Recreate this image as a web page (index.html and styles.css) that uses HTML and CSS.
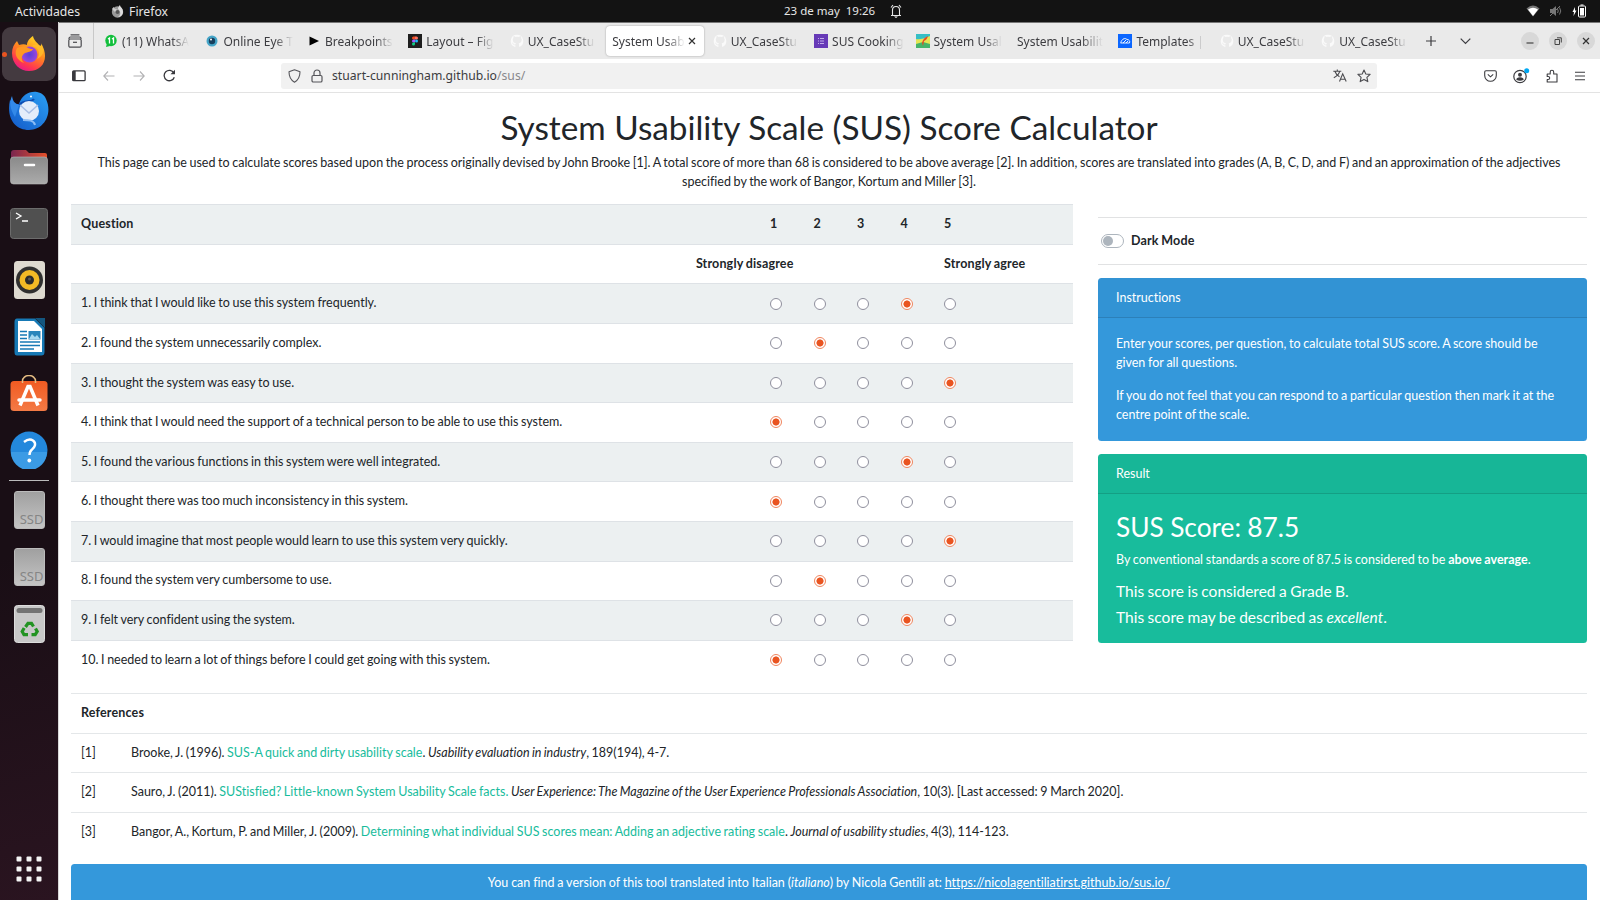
FILE: index.html
```
<!DOCTYPE html>
<html lang="es">
<head>
<meta charset="utf-8">
<title>System Usability Scale (SUS) Score Calculator</title>
<link rel="stylesheet" href="styles.css">
</head>
<body>
<svg class="defs" width="0" height="0">
  <defs>
    <symbol id="github" viewBox="0 0 16 16"><path fill="#fafafa" d="M8 .8a7.2 7.2 0 0 0-2.3 14c.4.1.5-.1.5-.4v-1.6c-2 .4-2.500-.5-2.700-1-.1-.2-.5-1-.9-1.100-.3-.2-.7-.6 0-.6.7 0 1.100.6 1.300.9.700 1.300 1.900.9 2.400.7.1-.5.3-.9.5-1.100-1.800-.2-3.600-.9-3.600-3.900 0-.9.3-1.600.8-2.100-.1-.2-.4-1 .1-2.100 0 0 .7-.2 2.200.8a7.500 7.500 0 0 1 4 0c1.500-1 2.200-.8 2.200-.8.5 1.100.2 1.900.1 2.100.5.600.8 1.300.8 2.100 0 3-1.900 3.700-3.600 3.900.3.200.5.700.5 1.400v2.200c0 .2.200.500.500.4A7.200 7.200 0 0 0 8 .8z"/></symbol>
  </defs>
</svg>
<div class="desktop">
  <header class="topbar">
    <span class="top-left">Actividades</span>
    <span class="top-app"><svg width="13" height="13" viewBox="0 0 13 13"><circle cx="6.500" cy="7" r="5.700" fill="#999"/><path d="M1 4l1.500-2 1 1.500L7 5 4 7z" fill="#ccc"/><path d="M7 4c0-2 1-3 2-4 0 2 3 3 3 7 0 3-3 5-5 5 3-2 3-5 0-8z" fill="#ddd"/><circle cx="6.500" cy="7" r="2" fill="#555"/></svg>Firefox</span>
    <span class="top-clock">23 de may&nbsp; 19:26</span>
    <svg class="bell" width="12" height="14" viewBox="0 0 12 14"><path d="M1 11.500h10M2.500 11V6a3.500 3.500 0 0 1 7 0v5M3 1L1 3.500M9 1l2 2.500" fill="none" stroke="#e8e8e8" stroke-width="1.100"/><path d="M4 12.500h4l-2 1.500z" fill="#fff"/></svg>
    <span class="top-status">
      <svg width="14" height="12" viewBox="0 0 14 12"><path d="M.5 3.500Q7-2.500 13.500 3.500L7 11.500z" fill="#777"/><path d="M2 4.500Q7 1 12 4.500L7 11z" fill="#fff"/></svg>
      <svg width="14" height="12" viewBox="0 0 14 12"><path d="M1 4h2.500L7 1v10L3.500 8H1z" fill="#777"/><path d="M8.500 4q1.500 2 0 4M10.500 2.500q2.500 3.500 0 7M1 11L11 1" stroke="#777" fill="none"/></svg>
      <svg width="15" height="14" viewBox="0 0 15 14"><path d="M3 3L.5 8H2l-.5 4L4.500 6.500H3z" fill="#fff"/><rect x="6.500" y="2" width="7" height="11" rx="1" fill="none" stroke="#fff"/><rect x="8" y="4" width="4" height="7.500" fill="#fff"/><path d="M8.500 1h3" stroke="#fff"/></svg>
    </span>
  </header>
  <div class="workspace">
    <nav class="dock">
      <span class="dock-item active"><i class="running"></i>
        <svg width="38" height="38" viewBox="0 0 38 38"><defs><linearGradient id="ff" x1=".8" y1="0" x2=".3" y2="1"><stop offset="0" stop-color="#ffe226"/><stop offset=".45" stop-color="#ff8a1e"/><stop offset=".8" stop-color="#ff3750"/><stop offset="1" stop-color="#e5178f"/></linearGradient><radialGradient id="fp"><stop offset="0" stop-color="#5b3fd8"/><stop offset="1" stop-color="#9a46dd"/></radialGradient></defs><path d="M2 18c0-5 2-9 5-12l2 4c3-1 6-1 8 0 0-4 3-7 6-9 1 5 4 6 7 10 2-1 1-3 1-3 9 15 2 28-12 28C10 36 2 29 2 18z" fill="url(#ff)"/><circle cx="19.500" cy="19.500" r="8" fill="url(#fp)"/><path d="M7 13c5-2 9-2 11 0 2 1 5 1 5 1-1 3-6 3-8 4-3 2-5 6-1 10C6 25 4 18 7 13z" fill="#ff9822"/><path d="M22 11c7 1 9 8 5 13 6-3 8-8 5-12-3-2-6-4-10-1z" fill="#ffbe2b" opacity=".8"/></svg></span>
      <span class="dock-item"><svg width="42" height="42" viewBox="0 0 42 42"><defs><linearGradient id="tb" x1="1" y1="0" x2="0" y2="1"><stop offset="0" stop-color="#2aa0f4"/><stop offset="1" stop-color="#1459c8"/></linearGradient></defs><path d="M2 10c3 4 6 4 9 4C14 5 21 1 29 2c5 1 8 4 9 7 7 15-2 31-17 31C7 40-2 28 2 10z" fill="url(#tb)"/><path d="M4 6c1 5 2 7 7 9l-4 12C2 19 1 12 4 6z" fill="#3389e8"/><path d="M11 15c5-6 12-2 15-6" fill="none" stroke="#0e4eb4" stroke-width="2"/><ellipse cx="21" cy="21" rx="10" ry="10" fill="#e4edfa"/><path d="M12 15l9 8 9-8" fill="none" stroke="#a8bee5" stroke-width="1.500"/><path d="M15 30c5 0 11 0 12 5" stroke="#8dbdf5" stroke-width="2" fill="none"/><circle cx="23" cy="6.500" r="1" fill="#fff"/></svg></span>
      <span class="dock-item"><svg width="38" height="36" viewBox="0 0 38 36"><defs><linearGradient id="fo"><stop stop-color="#7a2650"/><stop offset="1" stop-color="#e5502a"/></linearGradient><linearGradient id="gr" x2="0" y2="1"><stop stop-color="#8a8a8a"/><stop offset="1" stop-color="#ababab"/></linearGradient></defs><path d="M1 4q0-3 3-3h12l3 3h16q2 0 2 2v15H1z" fill="url(#fo)"/><rect x=".5" y="8" width="37" height="27" rx="3" fill="url(#gr)" stroke="#bbb" stroke-width=".6"/><path d="M15 16h9" stroke="#fff" stroke-width="2.500" stroke-linecap="round"/></svg></span>
      <span class="dock-item"><svg width="38" height="31" viewBox="0 0 38 31"><rect x=".5" y=".5" width="37" height="30" rx="3" fill="#505050" stroke="#6c6c6c"/><path d="M6 5l5 3-5 3M12 13h6" fill="none" stroke="#fff" stroke-width="1.300"/></svg></span>
      <span class="dock-item"><svg width="31" height="38" viewBox="0 0 31 38"><rect width="31" height="38" rx="3.500" fill="#dedad0"/><circle cx="15.500" cy="19" r="13.500" fill="#303030"/><circle cx="15.500" cy="19" r="10" fill="#f3ba25"/><circle cx="15.500" cy="19" r="4.500" fill="#2b2b2b"/><circle cx="15.500" cy="18" r="1.500" fill="#555"/></svg></span>
      <span class="dock-item"><svg width="31" height="38" viewBox="0 0 31 38"><path d="M3 .5h18L30.500 10v24q0 3.500-3 3.500H3Q.5 37.500.5 34V4Q.5.5 3 .5z" fill="#1679b5"/><path d="M4 3h16l8 8v23H4z" fill="#fff"/><path d="M21 0h10v10z" fill="#14567f"/><path d="M6 13.500h7M6 17h7M6 20.500h7M6 24h20M6 27.500h20M6 31h14" stroke="#1679b5" stroke-width="1.400"/><rect x="14.500" y="13" width="12" height="8.500" fill="#2b86bb"/><path d="M15 21l3-5 3 3 2-2 3 4z" fill="#a8d9f0"/></svg></span>
      <span class="dock-item"><svg width="38" height="38" viewBox="0 0 38 38"><defs><linearGradient id="st" x2="0" y2="1"><stop stop-color="#f15b22"/><stop offset="1" stop-color="#f47a45"/></linearGradient></defs><rect x=".5" y="6" width="37" height="30" rx="3.500" fill="url(#st)"/><path d="M12.500 8V6a6.500 5.500 0 0 1 13 0v2" fill="none" stroke="#e5bd83" stroke-width="1.500"/><path d="M10 30.500l8-19h2l8 19" fill="none" stroke="#fff" stroke-width="3.500"/><path d="M9 25h21" stroke="#fff" stroke-width="3.500" stroke-linecap="round"/></svg></span>
      <span class="dock-item"><svg width="38" height="38" viewBox="0 0 38 38"><circle cx="19" cy="19" r="18.500" fill="#2388dc"/><path d="M1 21a18 18 0 0 0 36 0z" fill="#3b9be5"/><path d="M14 11q5-4 9-1.500c4 3 1.500 7-1 9-2 1.500-2.500 3-2.500 5.500" fill="none" stroke="#fff" stroke-width="2.400"/><circle cx="19.300" cy="29.500" r="1.900" fill="#fff"/></svg></span>
      <i class="dock-line"></i>
      <span class="dock-item"><span class="ssd">SSD</span></span>
      <span class="dock-item"><span class="ssd">SSD</span></span>
      <span class="dock-item"><svg width="31" height="38" viewBox="0 0 31 38"><rect x=".5" y=".5" width="30" height="37" rx="3" fill="#c8c8c8" stroke="#ddd"/><rect x="2.500" y="3" width="26" height="5" rx="2.500" fill="#737373"/><g fill="none" stroke="#229322" stroke-width="3.200"><path d="M11.500 22l2.500-3.700h3.500l2 3.200M21.500 23.500l1.700 3-2 3.200H17.500M14 29.700H10L8.200 26.500l2-3.500"/></g></svg></span>
      <svg class="apps" width="26" height="26" viewBox="0 0 26 26"><g fill="#f5f5f5"><rect x=".5" y=".5" width="5" height="5" rx="1"/><rect x="10.500" y=".5" width="5" height="5" rx="1"/><rect x="20.500" y=".5" width="5" height="5" rx="1"/><rect x=".5" y="10.500" width="5" height="5" rx="1"/><rect x="10.500" y="10.500" width="5" height="5" rx="1"/><rect x="20.500" y="10.500" width="5" height="5" rx="1"/><rect x=".5" y="20.500" width="5" height="5" rx="1"/><rect x="10.500" y="20.500" width="5" height="5" rx="1"/><rect x="20.500" y="20.500" width="5" height="5" rx="1"/></g></svg>
    </nav>
    <div class="browser">
      <div class="tabbar">
        <span class="tabview"><svg width="14" height="14" viewBox="0 0 14 14" fill="none" stroke="#4b4b4f" stroke-width="1.200"><path d="M3 .8h8" stroke-linecap="round"/><path d="M1 5V4.500Q1 3 2.500 3h9Q13 3 13 4.500V5"/><rect x=".8" y="5" width="12.400" height="8.200" rx="1.500"/><path d="M5 8.300h4"/></svg></span>
        <div class="tabs">
          <span class="tab"><svg class="fav" viewBox="0 0 14 14"><circle cx="7" cy="6.500" r="5.700" fill="#12bf3c"/><path d="M2 13l1-4 3 3z" fill="#12bf3c"/><path d="M4 5l1.500-1v5.500M8 5l1.500-1v5.500" fill="none" stroke="#fff" stroke-width="1.300"/></svg><b class="fade">(11) WhatsA</b></span>
          <span class="tab"><svg class="fav" viewBox="0 0 14 14"><circle cx="7" cy="7" r="5.500" fill="#45a5c8"/><circle cx="7" cy="7" r="3.200" fill="#173f5d"/><circle cx="6" cy="5.500" r="1" fill="#fff"/></svg><b class="fade">Online Eye T</b></span>
          <span class="tab"><svg class="fav" viewBox="0 0 14 14"><path d="M2.500 2.500L12 7l-9.500 4.500z" fill="#000"/></svg><b class="fade">Breakpoints</b></span>
          <span class="tab"><svg class="fav" viewBox="0 0 14 14"><rect width="14" height="14" fill="#1e1e1e"/><path d="M5.500 2.500H7v3H5.500a1.500 1.500 0 0 1 0-3z" fill="#f24e1e"/><path d="M7 2.500h1.500a1.500 1.500 0 0 1 0 3H7z" fill="#ff7262"/><path d="M5.500 5.500H7v3H5.500a1.500 1.500 0 0 1 0-3z" fill="#a259ff"/><circle cx="8.500" cy="7" r="1.500" fill="#1abcfe"/><path d="M5.500 8.500H7V10a1.500 1.500 0 1 1-1.500-1.500z" fill="#0acf83"/></svg><b class="fade">Layout – Fig</b></span>
          <span class="tab"><svg class="fav"><use href="#github"/></svg><b class="fade">UX_CaseStu</b></span>
          <span class="tab current"><b class="fade">System Usab</b><svg width="8" height="8" viewBox="0 0 8 8"><path d="M1 1l6 6M7 1L1 7" stroke="#333" stroke-width="1.200"/></svg></span>
          <span class="tab"><svg class="fav"><use href="#github"/></svg><b class="fade">UX_CaseStu</b></span>
          <span class="tab"><svg class="fav" viewBox="0 0 14 14"><rect width="14" height="14" fill="#673ab7"/><path d="M4 4.500h1M4 7h1M4 9.500h1M6 4.500h4M6 7h4M6 9.500h4" stroke="#d9c9f5" stroke-width=".8"/></svg><b class="fade">SUS Cooking</b></span>
          <span class="tab"><svg class="fav" viewBox="0 0 14 14"><rect width="14" height="14" fill="#36bec5"/><path d="M0 5q5 1 14-3v12H0z" fill="#e5e553"/><path d="M0 10l7-2 7 2v4H0z" fill="#46b46a"/><path d="M6 9q1-5 6-7-1 4-4 5l-1 5z" fill="#e84a22"/></svg><b class="fade">System Usal</b></span>
          <span class="tab"><b class="fade">System Usabilit</b></span>
          <span class="tab"><svg class="fav" viewBox="0 0 14 14"><rect width="14" height="14" fill="#0b66ff"/><path d="M3 9a2 2 0 0 1 1-2.500 3 3 0 0 1 5-1 2.500 2.500 0 0 1 2.500 3.500M5 9l3-3M8 9l2-2M2.500 9h9" fill="none" stroke="#fff" stroke-width=".9"/></svg><b class="fade">Templates |</b></span>
          <span class="tab"><svg class="fav"><use href="#github"/></svg><b class="fade">UX_CaseStu</b></span>
          <span class="tab"><svg class="fav"><use href="#github"/></svg><b class="fade">UX_CaseStu</b></span>
        </div>
        <svg class="plus" width="10" height="10" viewBox="0 0 10 10"><path d="M5 0v10M0 5h10" stroke="#3c3c40" stroke-width="1.200"/></svg>
        <svg class="chev" width="11" height="7" viewBox="0 0 11 7"><path d="M.7.700l4.800 4.800L10.300.700" fill="none" stroke="#3c3c40" stroke-width="1.200"/></svg>
        <span class="winbtns">
          <i><svg width="8" height="8" viewBox="0 0 8 8"><path d="M.5 6h7" stroke="#444" stroke-width="1.200"/></svg></i>
          <i><svg width="8" height="8" viewBox="0 0 8 8"><path d="M1 2.500h4.500v5H1zM3 .8h4.300v4.700" fill="none" stroke="#444"/></svg></i>
          <i><svg width="8" height="8" viewBox="0 0 8 8"><path d="M1 1l6 6M7 1L1 7" stroke="#333" stroke-width="1.200"/></svg></i>
        </span>
      </div>
      <div class="navbar">
        <span class="navbtns">
          <svg width="14" height="12" viewBox="0 0 14 12"><rect x=".7" y=".9" width="12.400" height="9.800" rx="1" fill="none" stroke="#38383d" stroke-width="1.300"/><path d="M2.200 1v9.500" stroke="#38383d" stroke-width="3"/></svg>
          <svg width="12" height="10" viewBox="0 0 12 10"><path d="M5 .5L.8 5 5 9.500M1 5h10.500" fill="none" stroke="#b2b2b4" stroke-width="1.100"/></svg>
          <svg width="12" height="10" viewBox="0 0 12 10"><path d="M7 .5L11.200 5 7 9.500M11 5H.5" fill="none" stroke="#b2b2b4" stroke-width="1.100"/></svg>
          <svg width="13" height="13" viewBox="0 0 13 13"><path d="M11.300 8.200a5.200 5.200 0 1 1-.4-4.200" fill="none" stroke="#38383d" stroke-width="1.300"/><path d="M12 .8v4.400H7.500z" fill="#38383d"/></svg>
        </span>
        <div class="urlbar">
          <svg width="13" height="14" viewBox="0 0 13 14"><path d="M6.500.8L12 2.800c0 5-1.500 8.200-5.500 10.400C2.500 11 1 7.800 1 2.800z" fill="none" stroke="#55555a" stroke-width="1.100" stroke-linejoin="round"/></svg>
          <svg width="12" height="14" viewBox="0 0 12 14"><rect x="1" y="6.500" width="10" height="6.500" rx="1.300" fill="none" stroke="#55555a" stroke-width="1.200"/><path d="M3 6.500V4a3 3 0 0 1 6 0v2.500" fill="none" stroke="#55555a" stroke-width="1.200"/></svg>
          <span class="url">stuart-cunningham.github.io<em>/sus/</em></span>
          <svg class="translate" width="14" height="13" viewBox="0 0 14 13" fill="none" stroke="#4b4b4f" stroke-width="1.100"><path d="M.3 2.200h8M4.300.4v1.800M6.800 2.200C6 5.500 3.500 7.500.8 8.800M2 2.500C3 5.500 5 7 6.500 7.800"/><path d="M6.500 12.500L9.700 4.800l3.500 7.700M7.600 10.200h4.500"/></svg>
          <svg width="14" height="14" viewBox="0 0 14 14"><path d="M7 1l1.800 4 4.300.4-3.200 2.900.9 4.300L7 10.400l-3.800 2.200.9-4.300L.9 5.400 5.200 5z" fill="none" stroke="#4b4b4f" stroke-width="1.100" stroke-linejoin="round"/></svg>
        </div>
        <span class="tools">
          <svg width="13" height="12" viewBox="0 0 13 12" fill="none" stroke="#3c3c40" stroke-width="1.100"><path d="M2 .8h9q1.300 0 1.300 1.200v3.500a5.800 5.800 0 0 1-11.600 0V2Q.7.800 2 .8z"/><path d="M3.800 4.300l2.700 2.500 2.700-2.500"/></svg>
          <svg width="17" height="16" viewBox="0 0 17 16"><circle cx="7" cy="8.500" r="6.200" fill="none" stroke="#3c3c40" stroke-width="1.200"/><circle cx="7" cy="6.800" r="2" fill="#3c3c40"/><path d="M3.300 11.800q0-2.500 3.700-2.500t3.700 2.500q-3.700 2-7.400 0z" fill="#3c3c40"/><circle cx="13.700" cy="2.800" r="2.500" fill="#00a8f3"/></svg>
          <svg width="13" height="14" viewBox="0 0 13 14"><path d="M1.200 5h3V3a1.700 1.700 0 0 1 3.500 0v2H11v8H1.200v-2.500h1a1.500 1.500 0 0 0 0-3h-1z" fill="none" stroke="#3c3c40" stroke-width="1.100" stroke-linejoin="round"/></svg>
          <svg width="10" height="10" viewBox="0 0 10 10"><path d="M0 1.200h10M0 5h10M0 8.800h10" stroke="#3c3c40" stroke-width="1.100"/></svg>
        </span>
      </div>
      <main class="page">
        <h1>System Usability Scale (SUS) Score Calculator</h1>
        <p class="intro">This page can be used to calculate scores based upon the process originally devised by John Brooke [1]. A total score of more than 68 is considered to be above average [2]. In addition, scores are translated into grades (A, B, C, D, and F) and an approximation of the adjectives specified by the work of Bangor, Kortum and Miller [3].</p>
        <div class="columns">
          <div class="survey">
            <div class="row head shade"><span>Question</span><span>1</span><span>2</span><span>3</span><span>4</span><span>5</span></div>
            <div class="row head scale"><span>Strongly disagree</span><span>Strongly agree</span></div>
            <div class="row shade"><span>1. I think that I would like to use this system frequently.</span><i></i><i></i><i></i><i class="on"></i><i></i></div>
            <div class="row"><span>2. I found the system unnecessarily complex.</span><i></i><i class="on"></i><i></i><i></i><i></i></div>
            <div class="row shade"><span>3. I thought the system was easy to use.</span><i></i><i></i><i></i><i></i><i class="on"></i></div>
            <div class="row"><span>4. I think that I would need the support of a technical person to be able to use this system.</span><i class="on"></i><i></i><i></i><i></i><i></i></div>
            <div class="row shade"><span>5. I found the various functions in this system were well integrated.</span><i></i><i></i><i></i><i class="on"></i><i></i></div>
            <div class="row"><span>6. I thought there was too much inconsistency in this system.</span><i class="on"></i><i></i><i></i><i></i><i></i></div>
            <div class="row shade"><span>7. I would imagine that most people would learn to use this system very quickly.</span><i></i><i></i><i></i><i></i><i class="on"></i></div>
            <div class="row"><span>8. I found the system very cumbersome to use.</span><i></i><i class="on"></i><i></i><i></i><i></i></div>
            <div class="row shade"><span>9. I felt very confident using the system.</span><i></i><i></i><i></i><i class="on"></i><i></i></div>
            <div class="row"><span>10. I needed to learn a lot of things before I could get going with this system.</span><i class="on"></i><i></i><i></i><i></i><i></i></div>
          </div>
          <aside class="side">
            <div class="darkmode"><span class="switch"></span><span class="switch-label">Dark Mode</span></div>
            <section class="card info">
              <div class="card-head">Instructions</div>
              <div class="card-body"><p>Enter your scores, per question, to calculate total SUS score. A score should be given for all questions.</p><p>If you do not feel that you can respond to a particular question then mark it at the centre point of the scale.</p></div>
            </section>
            <section class="card result">
              <div class="card-head">Result</div>
              <div class="card-body"><h2>SUS Score: 87.5</h2><p>By conventional standards a score of 87.5 is considered to be <strong>above average</strong>.</p><h5>This score is considered a Grade B.</h5><h5>This score may be described as <em>excellent</em>.</h5></div>
            </section>
          </aside>
        </div>
        <div class="refs">
          <div class="ref"><strong>References</strong></div>
          <div class="ref"><span>[1]</span><p>Brooke, J. (1996). <a>SUS-A quick and dirty usability scale</a>. <em>Usability evaluation in industry</em>, 189(194), 4-7.</p></div>
          <div class="ref"><span>[2]</span><p>Sauro, J. (2011). <a>SUStisfied? Little-known System Usability Scale facts.</a> <em>User Experience: The Magazine of the User Experience Professionals Association</em>, 10(3). [Last accessed: 9 March 2020].</p></div>
          <div class="ref"><span>[3]</span><p>Bangor, A., Kortum, P. and Miller, J. (2009). <a>Determining what individual SUS scores mean: Adding an adjective rating scale</a>. <em>Journal of usability studies</em>, 4(3), 114-123.</p></div>
        </div>
        <div class="banner">You can find a version of this tool translated into Italian (<em>italiano</em>) by Nicola Gentili at: <u>https://nicolagentiliatirst.github.io/sus.io/</u></div>
      </main>
    </div>
  </div>
</div>
</body>
</html>
```
FILE: styles.css
```
* { box-sizing: border-box; }
body { margin: 0; overflow: hidden; }
.defs { position: absolute; }
svg { display: block; flex: none; }
h1, h2, h5, p { margin: 0; font-weight: 400; }

.desktop {
  width: 1600px; height: 900px; overflow: hidden;
  display: flex; flex-direction: column;
  font-family: "Noto Sans", sans-serif; font-size: 12px;
}

/* Top bar */
.topbar {
  position: relative; flex: none; height: 22px; background: #131313; color: #e6e6e6;
  display: flex; align-items: center; padding: 0 13px 0 15px; font-size: 11.5px;
}
.top-left, .top-app { font-size: 12.200px; }
.top-app { display: flex; align-items: center; gap: 5px; margin-left: 31px; }
.top-clock { position: absolute; left: 784px; top: 1.500px; line-height: 18px; white-space: nowrap; }
.bell { position: absolute; left: 890px; top: 4px; }
.top-status { margin-left: auto; display: flex; align-items: center; gap: 9px; }

.workspace { flex: 1; display: flex; min-height: 0; }

/* Dock */
.dock {
  width: 58px; flex: none; padding-top: 5px;
  background: linear-gradient(165deg, #190e15 60%, #2a1420);
  display: flex; flex-direction: column; align-items: center; gap: 2.600px;
}
.dock-item {
  position: relative; width: 54px; height: 54px; flex: none; border-radius: 9px;
  display: flex; align-items: center; justify-content: center;
}
.dock-item.active { background: #443a40; }
.running { position: absolute; left: 0; top: 25px; width: 5px; height: 5px; border-radius: 50%; background: #e95420; }
.dock-line { width: 40px; height: 1px; flex: none; background: #bbb; }
.ssd {
  width: 31px; height: 38px; border-radius: 3px; border: 1px solid #bbb;
  background: linear-gradient(#a0a0a0, #c4c4c4); color: #858585;
  display: flex; align-items: flex-end; justify-content: flex-end; font-size: 13px; line-height: 18px;
}
.apps { margin-top: auto; margin-bottom: 18px; }

/* Browser chrome */
.browser { flex: 1; min-width: 0; display: flex; flex-direction: column; background: #fff; border-left: 1px solid #d8d8d8; }
.tabbar {
  height: 37px; flex: none; background: #eaeaea; border-top: 1px solid #777;
  display: flex; align-items: center; color: #3c3c40;
}
.tabview { width: 35px; height: 36px; display: flex; align-items: center; padding-left: 9px; border-right: 1px solid #c8c8c8; }
.tabs { display: flex; padding-left: 4px; }
.tab { width: 101.450px; height: 30px; flex: none; display: flex; align-items: center; padding: 0 0 0 6px; }
.tab.current { width: 98px; margin: 0 2.450px 0 1px; background: #fff; border-radius: 4px; box-shadow: 0 0 2px #999; }
.fav { width: 14px; height: 14px; margin-right: 4px; }
.fade {
  flex: 1; font-weight: 400; white-space: nowrap; margin-right: 10px;
  -webkit-mask-image: linear-gradient(to right, #000 74%, transparent 100%);
  mask-image: linear-gradient(to right, #000 74%, transparent 100%);
}
.current .fade { margin-right: 3px; }
.current svg { margin-right: 9px; }
.plus { margin-left: 9px; }
.chev { margin-left: 24px; }
.winbtns { margin-left: auto; padding-right: 5px; display: flex; gap: 10px; }
.winbtns i { width: 18px; height: 18px; border-radius: 50%; background: #d8d8d8; display: flex; align-items: center; justify-content: center; }
.navbar { height: 34px; flex: none; display: flex; align-items: center; border-bottom: 1px solid #e3e3e3; }
.navbtns { display: flex; align-items: center; gap: 17.700px; width: 222px; padding-left: 12.500px; }
.urlbar { width: 1096px; height: 26px; border-radius: 3px; background: #f1f1f1; display: flex; align-items: center; padding: 0 6px 0 7px; color: #3c3c40; }
.urlbar svg + svg { margin-left: 10px; }
.url { margin-left: 9px; font-size: 12.200px; }
.url em { font-style: normal; color: #88888c; }
.translate { margin-left: auto; }
.tools { margin-left: auto; display: flex; align-items: center; gap: 16px; padding-right: 15px; }

/* Page */
.page {
  flex: 1; min-height: 0; overflow: hidden; padding: 0 13px 0 12px; color: #212529;
  font-family: Lato, sans-serif; font-size: 12.500px; line-height: 18.750px;
  font-variant-ligatures: none; word-spacing: -.6px;
}
h1 { font-size: 33.300px; line-height: 40px; margin: 13.500px 0 7.500px; text-align: center; word-spacing: 0; }
.intro { text-align: center; padding: 0 12px; }
.columns { display: flex; justify-content: space-between; margin-top: 12.800px; }
.survey { width: 1002px; }
.row {
  display: grid; grid-template-columns: 689px 43.500px 43.500px 43.500px 43.500px 1fr;
  height: 39.580px; align-items: center; border-top: 1px solid #dee2e6;
}
.row > span { padding: 0 10px; }
.row > i { width: 12px; height: 12px; margin-left: 10px; border: 1px solid #8f8f9d; border-radius: 50%; background: #fff; }
.row > i.on { border-color: #f0855e; background: radial-gradient(circle, #e95420 3.200px, #fff 3.900px); }
.row.scale { grid-template-columns: 732.500px 130.500px 1fr; }
.row.scale span:first-child { text-align: right; }
.row.scale span:last-child { grid-column: 3; }
.shade { background: #ecf0f1; }
.head, .darkmode, .ref strong { font-weight: 700; letter-spacing: .160px; }

.side { width: 489px; padding-top: 13px; }
.darkmode {
  height: 48px; border: solid #e1e2e3; border-width: 1px 0; display: flex; align-items: center; gap: 7px;
  padding-left: 3px; margin-bottom: 13px;
}
.switch { width: 23px; height: 14px; margin-bottom: 1px; border-radius: 7px; border: 1px solid #adb5bd; display: flex; align-items: center; padding-left: 1px; }
.switch::before { content: ""; width: 10px; height: 10px; border-radius: 50%; background: #adb5bd; }
.switch-label { padding-top: 1px; }
.card { border-radius: 3.500px; color: #fff; padding: 0 1px 1px; margin-bottom: 13px; word-spacing: -.450px; }
.card-head { height: 40px; padding: 11px 18px 0; margin: 0 -1px; background: rgba(0,0,0,.03); border-bottom: 1px solid rgba(0,0,0,.125); border-radius: 3.500px 3.500px 0 0; }
.card-body { padding: 17px 17px 0; }
.info { background: #3498db; height: 163px; }
.info p { margin-bottom: 14px; }
.result { background: #18bc9c; height: 189px; }
.result h2 { font-size: 26.300px; line-height: 32px; margin: -.7px 0 8px; }
.result p { margin-bottom: 13px; }
.result h5 { font-size: 15.500px; line-height: 19px; margin-bottom: 7px; }

.refs { margin-top: 14px; }
.ref { display: flex; height: 39.580px; align-items: center; padding-left: 10px; border-top: 1px solid #e4e7e9; }
.ref span { width: 50px; }
.ref a { color: #18bc9c; }
.banner { margin-top: 12.500px; height: 50px; padding-top: 10px; background: #3498db; color: #fff; border-radius: 3.500px; text-align: center; word-spacing: -.350px; }
```
